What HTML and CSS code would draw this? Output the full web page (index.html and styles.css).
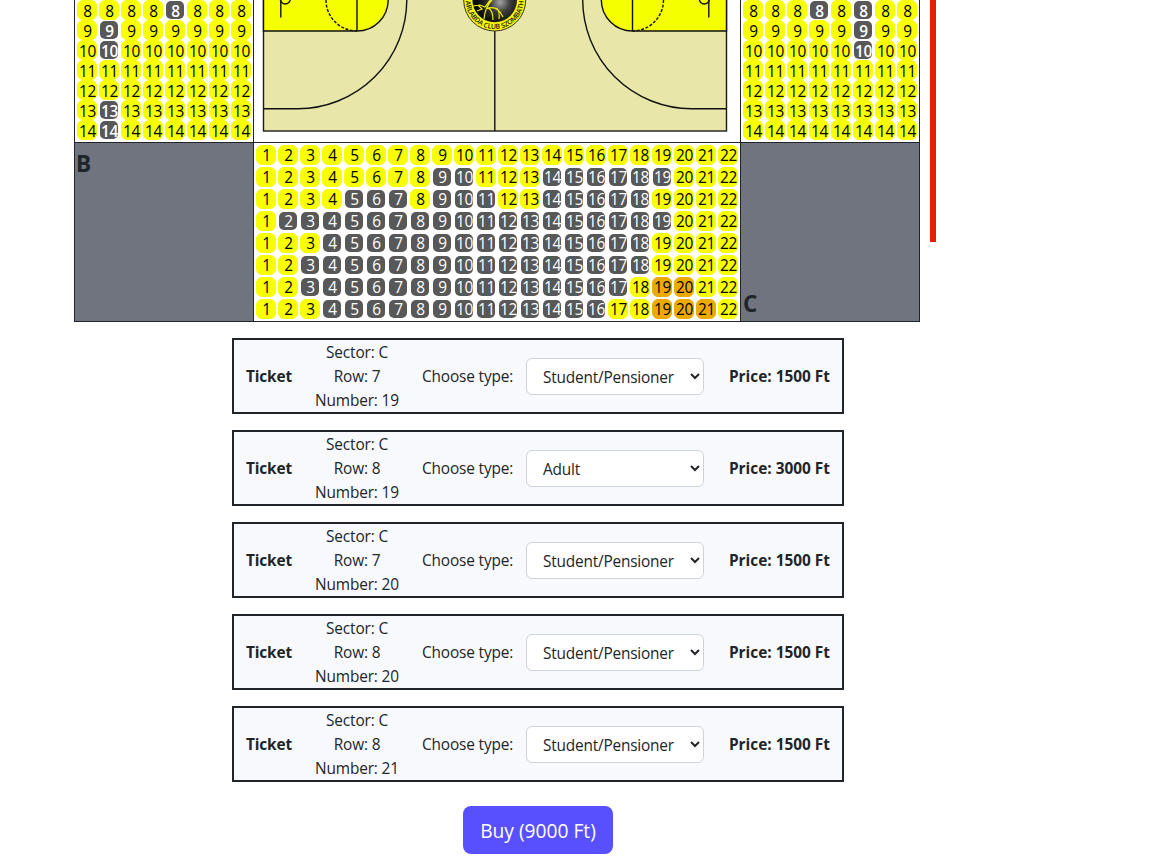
FILE: index.html
```html
<!DOCTYPE html>
<html lang="en">
<head>
<meta charset="utf-8">
<title>Tickets</title>
<link rel="stylesheet" href="styles.css">
</head>
<body>
<main class="page">
  <div class="venue">
    <section class="arena">
      <div class="stand stand-side" data-stand="A"></div>
      <div class="court">
        <svg class="court-drawing" width="486" height="142" viewBox="254 0 486 142">
          <defs>
            <radialGradient id="ball" cx="0.62" cy="0.55" r="0.5">
              <stop offset="0" stop-color="#a5a5a5"/>
              <stop offset="0.45" stop-color="#3c3c3c"/>
              <stop offset="1" stop-color="#0c0c0c"/>
            </radialGradient>
            <path id="ring" d="M465.7 0A29 29 0 0 0 523.7 0"/>
          </defs>
          <rect x="263.5" y="-10" width="463" height="141" fill="#e8e6a9" stroke="#1a1a1a" stroke-width="1.4"/>
          <g class="line">
            <path class="key" d="M263.5 -10V31H357A31.2 31.2 0 0 0 388.2 0V-10"/>
            <path d="M357 0V31"/>
            <path class="dashed" d="M326 0A31 31 0 0 0 357 31"/>
            <path d="M280.8 0V17.5"/>
            <circle cx="285.3" cy="-1" r="5"/>
            <path d="M263.5 108.7H298A109 109 0 0 0 406.8 0V-5"/>
            <path class="key" d="M726.5 -10V31H632.5A31.2 31.2 0 0 1 601.3 0V-10"/>
            <path d="M632.5 0V31"/>
            <path class="dashed" d="M663.5 0A31 31 0 0 1 632.5 31"/>
            <path d="M708.8 0V17.5"/>
            <circle cx="704.3" cy="-1" r="5"/>
            <path d="M726.5 108.7H691.5A109 109 0 0 1 582.7 0V-5"/>
            <path d="M494.8 31V131"/>
          </g>
          <circle cx="494.7" cy="0" r="31" fill="#f5f800" stroke="#333" stroke-width="1"/>
          <circle cx="494.7" cy="0" r="22.3" fill="url(#ball)"/>
          <path class="player" d="M473 6L480 5L485 7L491 -1M478 5L482 9L477 11M492 0Q485 7 484 19M486 9Q497 4 503 17M488 8Q493 10 493 20M497 8Q500 12 499 19"/>
          <text class="crest-text" text-anchor="middle"><textPath href="#ring" startOffset="50%" textLength="89">ARLABDA CLUB SZOMBATH</textPath></text>
        </svg>
      </div>
      <div class="stand stand-side" data-stand="D"></div>
      <div class="corner corner-b">B</div>
      <div class="stand stand-end" data-stand="C"></div>
      <div class="corner corner-c">C</div>
    </section>
    <div class="marker"></div>
  </div>

  <section class="checkout">
    <div class="ticket">
      <strong class="name">Ticket</strong>
      <div class="place">Sector: C<br>Row: 7<br>Number: 19</div>
      <span class="label">Choose type:</span>
      <select class="type"><option>Student/Pensioner</option><option>Adult</option></select>
      <strong class="price">Price: 1500 Ft</strong>
    </div>
    <div class="ticket">
      <strong class="name">Ticket</strong>
      <div class="place">Sector: C<br>Row: 8<br>Number: 19</div>
      <span class="label">Choose type:</span>
      <select class="type"><option>Student/Pensioner</option><option selected>Adult</option></select>
      <strong class="price">Price: 3000 Ft</strong>
    </div>
    <div class="ticket">
      <strong class="name">Ticket</strong>
      <div class="place">Sector: C<br>Row: 7<br>Number: 20</div>
      <span class="label">Choose type:</span>
      <select class="type"><option>Student/Pensioner</option><option>Adult</option></select>
      <strong class="price">Price: 1500 Ft</strong>
    </div>
    <div class="ticket">
      <strong class="name">Ticket</strong>
      <div class="place">Sector: C<br>Row: 8<br>Number: 20</div>
      <span class="label">Choose type:</span>
      <select class="type"><option>Student/Pensioner</option><option>Adult</option></select>
      <strong class="price">Price: 1500 Ft</strong>
    </div>
    <div class="ticket">
      <strong class="name">Ticket</strong>
      <div class="place">Sector: C<br>Row: 8<br>Number: 21</div>
      <span class="label">Choose type:</span>
      <select class="type"><option>Student/Pensioner</option><option>Adult</option></select>
      <strong class="price">Price: 1500 Ft</strong>
    </div>
    <button class="buy">Buy (9000 Ft)</button>
  </section>
</main>
<script src="seats.js"></script>
</body>
</html>
```
FILE: styles.css
```css
* { box-sizing: border-box; }

body {
  margin: 0;
  background: #fff;
  color: #212529;
  font-family: "Open Sans", "Noto Sans", sans-serif;
  font-size: 15.4px;
  letter-spacing: -0.15px;
  line-height: 24px;
}

.page {
  height: 861px;
  overflow: hidden;
}

.venue {
  display: flex;
  align-items: flex-start;
  gap: 10px;
  padding-left: 74px;
}

.arena {
  display: grid;
  grid-template-columns: 178px 486px 178px;
  grid-template-rows: 142px 178px;
  gap: 1px;
  padding: 0 1px 1px;
  background: #212529;
}

.marker {
  width: 6px;
  height: 242px;
  background: #e81e00;
}

.court { background: #fff; }
.court-drawing { display: block; }
.line { fill: none; stroke: #111; stroke-width: 1.4; }
.key { fill: #f5ff00; }
.dashed { stroke-dasharray: 3 1.6; }
.player { fill: none; stroke: #eef000; stroke-width: 1.2; }
.crest-text { font-size: 6.9px; font-weight: 600; letter-spacing: 0; fill: #222; }

.stand {
  display: grid;
  justify-content: start;
  background: #fff;
}

.stand-side {
  grid-template-columns: repeat(8, 22px);
  grid-auto-rows: 20px;
  padding-left: 2px;
}

.stand-end {
  grid-template-columns: repeat(22, 22px);
  grid-auto-rows: 22px;
  padding: 2px 0 0 2px;
}

.seat {
  display: flex;
  justify-content: center;
  width: 20px;
  height: 20px;
  padding-left: 1px;
  border: 1px solid #f8ff00;
  border-radius: 6px;
  background: #f8ff00;
  color: #000;
  letter-spacing: -0.2px;
  line-height: 20px;
  white-space: nowrap;
}

.seat-taken {
  border-color: transparent;
  background: #585858;
  background-clip: padding-box;
  color: #fff;
  font-weight: 500;
}

.stand-side .seat { line-height: 21px; }
.stand-side .seat-taken { font-weight: 600; }

.seat-picked {
  border-color: #ecaa00;
  background: #ecaa00;
}

.corner {
  display: flex;
  padding: 6px 2px;
  background: #70747f;
  font-size: 22.5px;
  font-weight: 700;
  line-height: 30px;
}

.corner-b { align-items: flex-start; padding-left: 1px; }
.corner-c { align-items: flex-end; padding-bottom: 2px; }

.checkout {
  display: flex;
  flex-direction: column;
  align-items: center;
  gap: 16px;
  width: 612px;
  margin: 16px 0 0 232px;
}

.ticket {
  display: grid;
  grid-template-columns: 46px 130px 104px 178px 1fr;
  grid-template-rows: 72px;
  align-items: center;
  width: 612px;
  height: 76px;
  padding: 0 12px;
  border: 2px solid #212529;
  background: #f8f9fc;
}

.name, .place, .label, .price {
  margin-bottom: -1px;
  padding-top: 1px;
}

.place { text-align: center; }

.type {
  width: 178px;
  height: 37px;
  padding: 3px 2px 1px 12px;
  border: 1px solid #ced2dd;
  border-radius: 6px;
  background: #fff;
  color: #212529;
  font: inherit;
  letter-spacing: -0.2px;
}

.price {
  letter-spacing: 0;
  text-align: right;
}

.buy {
  width: 150px;
  height: 48px;
  margin-top: 8px;
  padding: 0;
  border: 0;
  border-radius: 8px;
  background: #5850ff;
  color: #fff;
  font-family: inherit;
  font-size: 19.2px;
  letter-spacing: 0;
}
```
FILE: seats.js
```javascript
function range(a, b) {
  return Array.from({ length: b - a + 1 }, (_, i) => a + i);
}

function addSeat(stand, number, state) {
  const seat = document.createElement("div");
  seat.className = "seat" + (state ? " seat-" + state : "");
  seat.textContent = number;
  stand.append(seat);
}

// Side stands number their seats from top to bottom in eight columns.
const sideTaken = {
  A: { 8: [5], 9: [2], 10: [2], 13: [2], 14: [2] },
  D: { 8: [4, 6], 9: [6], 10: [6] }
};

for (const [name, taken] of Object.entries(sideTaken)) {
  const stand = document.querySelector(`[data-stand="${name}"]`);
  for (const number of range(8, 14)) {
    for (const column of range(1, 8)) {
      addSeat(stand, number, (taken[number] || []).includes(column) ? "taken" : "");
    }
  }
}

const endRows = [
  { taken: [] },
  { taken: [9, 10, ...range(14, 19)] },
  { taken: [5, 6, 7, 9, 10, 11, ...range(14, 18)] },
  { taken: range(2, 19) },
  { taken: range(4, 18) },
  { taken: range(3, 18) },
  { taken: range(3, 17), picked: [19, 20] },
  { taken: range(4, 16), picked: [19, 20, 21] }
];

const endStand = document.querySelector('[data-stand="C"]');
for (const row of endRows) {
  for (const number of range(1, 22)) {
    const picked = (row.picked || []).includes(number);
    addSeat(endStand, number, picked ? "picked" : row.taken.includes(number) ? "taken" : "");
  }
}
```
